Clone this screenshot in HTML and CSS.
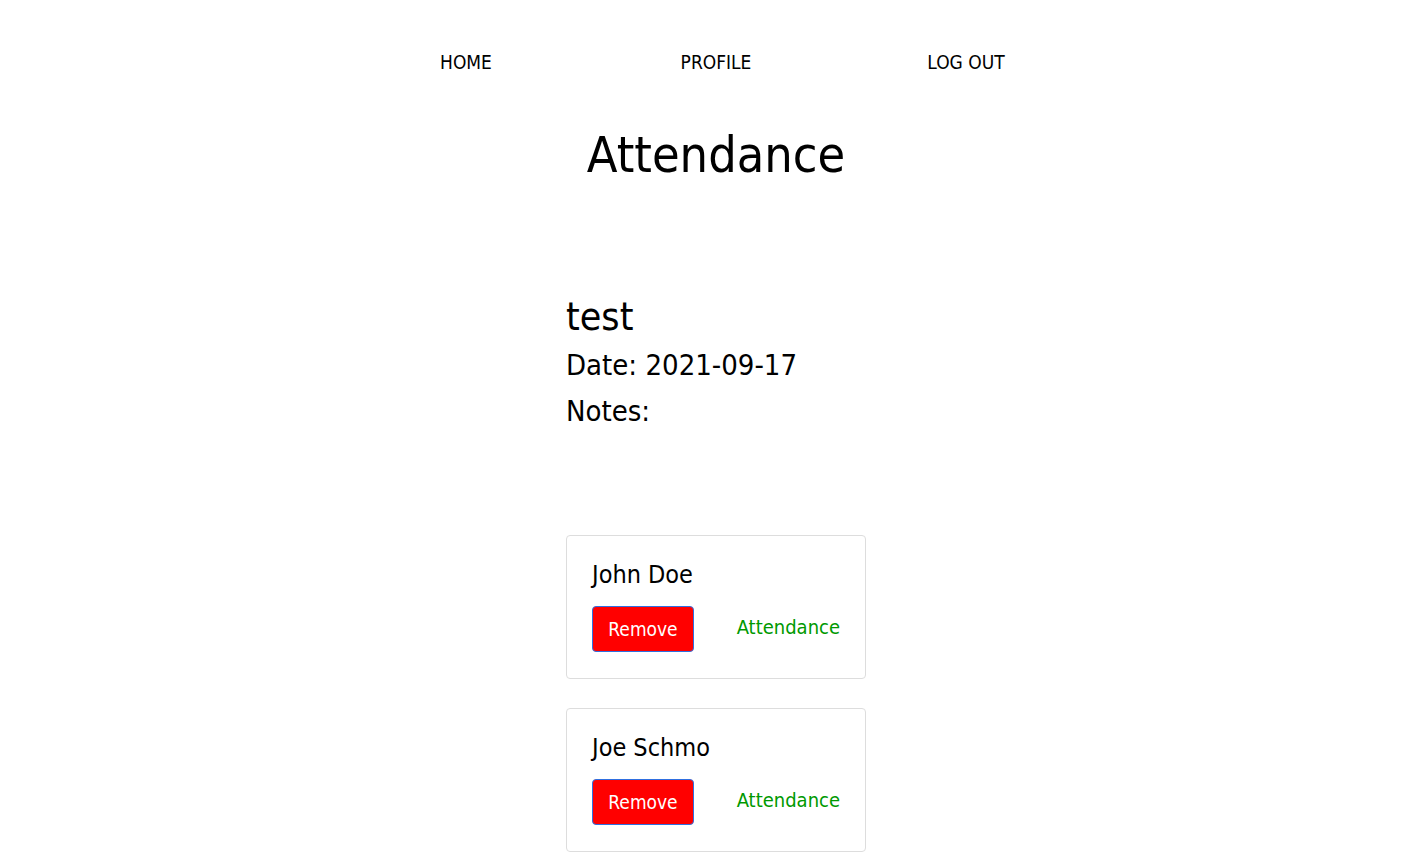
FILE: index.html
```html
<!DOCTYPE html>
<html>
<head>
<meta charset="utf-8">
<link rel="stylesheet" href="styles.css">
</head>
<body>
<div class="page">
  <nav class="nav">
    <a class="nav-link" href="#">HOME</a>
    <a class="nav-link" href="#">PROFILE</a>
    <a class="nav-link" href="#">LOG OUT</a>
  </nav>
  <h1 class="title">Attendance</h1>
  <section class="event">
    <h2 class="event-name">test</h2>
    <p class="event-line">Date: 2021-09-17</p>
    <p class="event-line">Notes:</p>
  </section>
  <div class="cards">
    <div class="card">
      <div class="card-name">John Doe</div>
      <div class="card-actions">
        <button class="btn-remove">Remove</button>
        <a class="att-link" href="#">Attendance</a>
      </div>
    </div>
    <div class="card">
      <div class="card-name">Joe Schmo</div>
      <div class="card-actions">
        <button class="btn-remove">Remove</button>
        <a class="att-link" href="#">Attendance</a>
      </div>
    </div>
  </div>
</div>
</body>
</html>
```
FILE: styles.css
```css
html, body {
  margin: 0;
  padding: 0;
  background: #fff;
}
body {
  font-family: "DejaVu Sans Condensed", "DejaVu Sans", sans-serif;
  color: #000;
}
.page {
  padding-left: 13px;
  display: flex;
  flex-direction: column;
  align-items: center;
}
.nav {
  display: flex;
  width: 750px;
  padding-top: 50px;
}
.nav-link {
  flex: 1;
  text-align: center;
  font-size: 19px;
  line-height: 24px;
  color: #000;
  text-decoration: none;
}
.title {
  margin: 51px 0 0;
  font-size: 50px;
  font-weight: normal;
  line-height: 60px;
}
.event {
  width: 300px;
  margin-top: 106px;
}
.event-name {
  margin: 0;
  font-size: 39px;
  font-weight: normal;
  line-height: 51px;
}
.event-line {
  margin: 0;
  font-size: 29px;
  line-height: 46px;
}
.cards {
  margin-top: 101px;
  display: flex;
  flex-direction: column;
  gap: 29px;
  width: 300px;
}
.card {
  border: 1px solid #dddddd;
  border-radius: 4px;
  padding: 24px 25px 26px;
  height: 144px;
  box-sizing: border-box;
}
.card-name {
  font-size: 25px;
  line-height: 30px;
}
.card-actions {
  margin-top: 16px;
  display: flex;
  align-items: center;
  justify-content: space-between;
}
.btn-remove {
  width: 102px;
  height: 46px;
  background: #ff0000;
  color: #fff;
  border: 1px solid #2f6fe0;
  border-radius: 4px;
  font-family: inherit;
  font-size: 19px;
  padding: 0;
}
.att-link {
  font-size: 20px;
  color: #009900;
  text-decoration: none;
  margin-top: -4px;
}
```
